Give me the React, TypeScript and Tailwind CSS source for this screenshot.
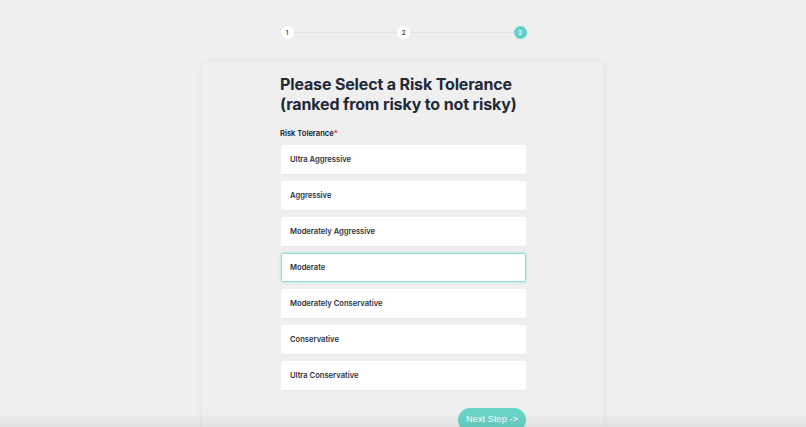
import React from "react";

const options = [
  "Ultra Aggressive",
  "Aggressive",
  "Moderately Aggressive",
  "Moderate",
  "Moderately Conservative",
  "Conservative",
  "Ultra Conservative",
];

export default function App() {
  return (
    <div
      className="relative min-h-[427px] h-[427px] overflow-hidden bg-[#efefef] flex flex-col items-center"
      style={{ fontFamily: "Inter, 'Noto Sans', sans-serif" }}
    >
      <div className="mt-[26px] w-[246px] ml-[1px] flex items-center">
        <div className="w-[13px] h-[13px] rounded-full bg-white flex items-center justify-center text-[6px] font-semibold text-[#374151]">1</div>
        <div className="flex-1 h-px bg-[#e2e2e2]" />
        <div className="w-[13px] h-[13px] rounded-full bg-white flex items-center justify-center text-[6px] font-semibold text-[#374151]">2</div>
        <div className="flex-1 h-px bg-[#e2e2e2]" />
        <div className="w-[13px] h-[13px] rounded-full bg-[#5fd0cc] flex items-center justify-center text-[6px] font-semibold text-white">3</div>
      </div>
      <div className="mt-[23px] w-[402px] flex-1 bg-[#efefef] rounded-t-[6px] shadow-[0_0_6px_rgba(0,0,0,0.06)] pl-[79px] pr-[78px] pt-[12px]">
        <h1 className="-ml-px text-[16px] leading-[20px] font-bold text-[#1f2937] tracking-[-0.15px] whitespace-nowrap">
          Please Select a Risk Tolerance
          <br />
          (ranked from risky to not risky)
        </h1>
        <div className="-ml-px mt-[15px] text-[7.6px] font-semibold text-[#111827] leading-[10px]">
          Risk Tolerance<span className="text-[#e11d48]">*</span>
        </div>
        <div className="mt-[6px] flex flex-col gap-[7px]">
          {options.map((o) => (
            <div
              key={o}
              className={
                o === "Moderate"
                  ? "h-[29px] rounded-[2px] bg-white border border-[#8edcd6] flex items-center pl-[8px] text-[7.6px] font-semibold text-[#2d3340] shadow-[0_0_3px_rgba(110,214,206,0.6)]"
                  : "h-[29px] rounded-[2px] bg-white flex items-center pl-[9px] text-[7.6px] font-semibold text-[#2d3340] shadow-[0_1px_1px_rgba(0,0,0,0.03)]"
              }
            >
              {o}
            </div>
          ))}
        </div>
        <div className="mt-[18px] flex justify-end">
          <button
            className="h-[24px] px-[8px] rounded-full bg-[#6ad4c7] text-white text-[9.3px] font-normal"
            style={{ fontFamily: "'Liberation Sans', Arial, sans-serif" }}
          >
            Next Step -&gt;
          </button>
        </div>
      </div>
      <div className="pointer-events-none absolute left-0 right-0 bottom-0 h-[14px] bg-gradient-to-b from-transparent to-[rgba(0,0,0,0.06)]" />
    </div>
  );
}
